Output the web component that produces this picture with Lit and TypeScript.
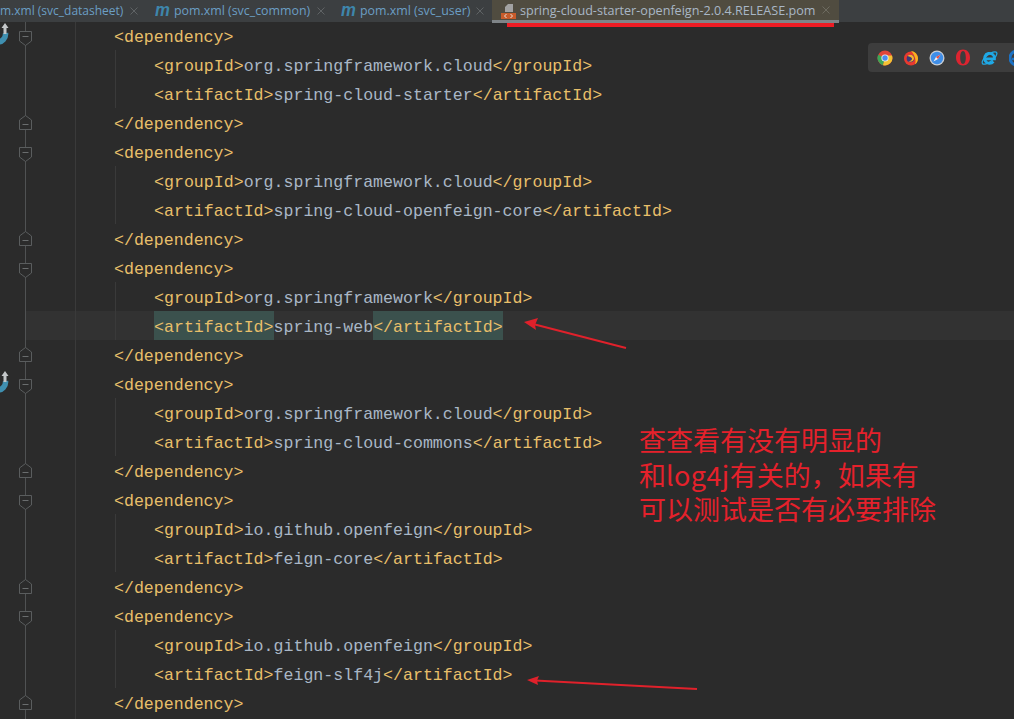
import { LitElement, html, css, svg } from "lit";
import { customElement } from "lit/decorators.js";

type Row = { kind: "open" | "close" | "child" | "blank"; tag?: string; text?: string; hl?: boolean; maven?: boolean };

const deps: [string, string][] = [
  ["org.springframework.cloud", "spring-cloud-starter"],
  ["org.springframework.cloud", "spring-cloud-openfeign-core"],
  ["org.springframework", "spring-web"],
  ["org.springframework.cloud", "spring-cloud-commons"],
  ["io.github.openfeign", "feign-core"],
  ["io.github.openfeign", "feign-slf4j"],
];

const rows: Row[] = [];
deps.forEach(([g, a], i) => {
  rows.push({ kind: "open", maven: i === 0 || i === 3 });
  rows.push({ kind: "child", tag: "groupId", text: g });
  rows.push({ kind: "child", tag: "artifactId", text: a, hl: i === 2 });
  rows.push({ kind: "close" });
});
rows.push({ kind: "blank" });

const fold = (up: boolean) => html`<svg class="fold ${up ? "up" : "down"}" width="13" height="15" viewBox="0 0 13 15">
  <path d="${up ? "M.5 14.5V5L6.5 .5 12.5 5v9.500z" : "M.5 .5V10l6 4.500 6-4.500V.5z"}" fill="#2b2b2b" stroke="#5a5d5e"/>
  <path d="${up ? "M3.500 9.500h6" : "M3.500 5.500h6"}" stroke="#6a6d6e"/>
</svg>`;

const maven = html`<svg class="maven" width="9" height="24" viewBox="0 0 9 24">
  <path d="M5.500 11A8 8 0 0 1 -3 20" fill="none" stroke="#3f8fb0" stroke-width="5.500"/>
  <path d="M5 1 8.500 6H6.500v6h-3V6H1.500z" fill="#c4c7c9"/>
</svg>`;

const cross = (c: string) => html`<svg class="x" width="8" height="8" viewBox="0 0 8 8"><path d="M.5 .5l7 7M7.500 .5l-7 7" stroke="${c}" stroke-width="1"/></svg>`;

@customElement("app-root")
export class AppRoot extends LitElement {
  static styles = css`
    :host { display: block; width: 1014px; height: 719px; overflow: hidden; position: relative; background: #2b2b2b; }
    .tabs { display: flex; align-items: flex-start; height: 22px; background: #3c3f41; font-family: "Open Sans", "Noto Sans", sans-serif; font-size: 12.4px; color: #6b9ec4; position: relative; z-index: 2; margin-bottom: -1px; white-space: nowrap; }
    .tab { display: flex; align-items: center; height: 21px; flex: none; }
    .tab .x { flex: none; }
    .m { display: inline-block; font: italic 700 19px/1 "Liberation Sans", sans-serif; color: #3e86ac; margin-right: 4px; width: 15px; transform: scaleX(0.88); transform-origin: left center; position: relative; top: -1px; }
    .t0 { width: 155px; font-size: 12px; }
    .t0 .x { margin-left: 7px; }
    .t1 { width: 186px; }
    .t1 .x { margin-left: 7px; }
    .t2 { width: 151px; }
    .t2 .x { margin-left: 6px; }
    .active { width: 347px; height: 23px; box-sizing: border-box; background: #504c40; border-bottom: 3px solid #7f8488; color: #a9b7c6; font-size: 12.6px; padding-left: 9px; }
    .active svg:first-child { margin-right: 4px; flex: none; }
    .active .x { margin-left: 7px; }
    .code { font-family: "Liberation Mono", monospace; font-size: 16.6px; line-height: 29px; color: #a9b7c6; }
    .row { display: flex; height: 29px; position: relative; }
    .gutter { flex: none; width: 25px; position: relative; }
    .body { flex: 1; position: relative; border-left: 1px solid #505253; white-space: pre; }
    .current .body { background: #323232; }
    .guide1, .guide2 { position: absolute; top: 0; bottom: 0; width: 1px; background: #3a3a3a; }
    .guide1 { left: 49px; }
    .guide2 { left: 89px; }
    .text { position: absolute; top: 2px; z-index: 0; }
    .text.lvl1 { left: 88px; }
    .text.lvl2 { left: 128px; }
    .tag { color: #e8bf6a; }
    .hl { display: inline-block; position: relative; }
    .hl::before { content: ""; position: absolute; left: 0; right: 0; top: -2px; height: 29px; background: #3b514d; z-index: -1; }
    .fold { position: absolute; left: 19px; z-index: 1; }
    .fold.down { top: 10px; }
    .fold.up { top: 7px; }
    .maven { position: absolute; left: 0; top: 1px; }
    .note { position: absolute; left: 639px; top: 423px; font-family: "Noto Sans CJK SC", sans-serif; font-size: 27px; line-height: 34.5px; color: #e5212b; white-space: nowrap; }
    .note .latin { letter-spacing: 0.4px; }
    .underline { position: absolute; left: 507px; top: 23px; width: 327px; height: 4px; background: #ed1c24; z-index: 3; }
    .browsers { position: absolute; left: 868px; top: 43px; width: 160px; height: 29px; background: #3d3d3d; border-radius: 4px; display: flex; align-items: center; gap: 10px; padding-left: 9px; box-sizing: border-box; z-index: 3; }
    .browsers svg { flex: none; }
    .browsers .ie { margin-left: -1px; }
    .overlay { position: absolute; left: 0; top: 0; z-index: 3; pointer-events: none; }
  `;

  private renderRow(r: Row) {
    const inner =
      r.kind === "open"
        ? html`<span class="text lvl1 tag">&lt;dependency&gt;</span>`
        : r.kind === "close"
        ? html`<span class="text lvl1 tag">&lt;/dependency&gt;</span>`
        : r.kind === "child"
        ? r.hl
          ? html`<span class="text lvl2"><span class="tag hl">&lt;${r.tag}&gt;</span>${r.text}<span class="tag hl">&lt;/${r.tag}&gt;</span></span>`
          : html`<span class="text lvl2"><span class="tag">&lt;${r.tag}&gt;</span>${r.text}<span class="tag">&lt;/${r.tag}&gt;</span></span>`
        : null;
    return html`<div class="row ${r.hl ? "current" : ""}">
      <div class="gutter">${r.maven ? maven : null}</div>
      ${r.kind === "open" ? fold(false) : r.kind === "close" ? fold(true) : null}
      <div class="body">
        <i class="guide1"></i>
        ${r.kind === "child" ? html`<i class="guide2"></i>` : null}
        ${inner}
      </div>
    </div>`;
  }

  render() {
    return html`
      <div class="tabs">
        <div class="tab t0"><span>m.xml (svc_datasheet)</span>${cross("#5f6365")}</div>
        <div class="tab t1"><span class="m">m</span><span>pom.xml (svc_common)</span>${cross("#5f6365")}</div>
        <div class="tab t2"><span class="m">m</span><span>pom.xml (svc_user)</span>${cross("#5f6365")}</div>
        <div class="tab active">
          <svg width="15" height="18" viewBox="0 0 15 18">
            <path d="M7 3h5v8H4V6z" fill="#a2a2a2"/>
            <rect x="0" y="12" width="15" height="6" fill="#c75b2a"/>
            <path d="M5.500 13 3.500 15l2 2M9.500 13l2 2-2 2" fill="none" stroke="#e8e0d8" stroke-width="1"/>
          </svg>
          <span>spring-cloud-starter-openfeign-2.0.4.RELEASE.pom</span>${cross("#6d6b60")}
        </div>
      </div>
      <div class="code">${rows.map((r) => this.renderRow(r))}</div>
      <div class="underline"></div>
      <div class="browsers">
        <svg width="16" height="16" viewBox="0 0 16 16">
          <circle cx="8" cy="8" r="7.500" fill="#e0453a"/>
          <path d="M8 8 1.200 4.800A7.500 7.500 0 0 0 6 15.200z" fill="#3ba757"/>
          <path d="M8 8 6 15.200A7.500 7.500 0 0 0 15 5.500H8z" fill="#f3c233"/>
          <circle cx="8" cy="8" r="3.600" fill="#eee"/><circle cx="8" cy="8" r="2.700" fill="#4c8bf0"/>
        </svg>
        <svg width="16" height="16" viewBox="0 0 16 16">
          <circle cx="8" cy="8.500" r="7" fill="#e8392f"/>
          <path d="M8 1C11 1 15 4 15 8.500c0 2.500-1 4.500-3 5.800C13.500 11 12 5 8 1z" fill="#f8b21f"/>
          <circle cx="7.500" cy="8.500" r="3.800" fill="#3c3a7a"/>
          <path d="M4.500 6c2-2 6-1.500 6.500 2 .3 3-3 4.500-5.500 3.300 2 0 3.500-1 3.500-2.500C9 7 6.500 7 4.500 6z" fill="#f7b32b"/>
        </svg>
        <svg width="16" height="16" viewBox="0 0 16 16">
          <circle cx="8" cy="8" r="7.500" fill="#c9ced4"/><circle cx="8" cy="8" r="6.200" fill="#3f8ee8"/>
          <path d="M11.500 4.500 9 9 4.500 11.500 7 7z" fill="#f4f4f4"/><path d="M11.500 4.500 9 9 7 7z" fill="#e8483f"/>
        </svg>
        <svg width="16" height="17" viewBox="0 0 16 17">
          <path fill-rule="evenodd" d="M8 .5C3.800 .5 1 4 1 8.500s2.800 8 7 8 7-3.500 7-8-2.800-8-7-8zm0 1.500c1.800 0 2.800 2.900 2.800 6.500S9.800 15 8 15s-2.800-2.900-2.800-6.500S6.200 2 8 2z" fill="#dc2430"/>
        </svg>
        <svg class="ie" width="19" height="18" viewBox="0 0 19 18">
          <ellipse cx="9.500" cy="9" rx="9" ry="3.500" transform="rotate(-38 9.500 9)" fill="none" stroke="#1fa9e6" stroke-width="1.300"/>
          <path d="M5 9.800h9.500A5 5 0 1 0 13.400 12.500" fill="none" stroke="#1fa9e6" stroke-width="2.800"/>
        </svg>
        <svg width="16" height="18" viewBox="0 0 16 18">
          <circle cx="8" cy="9" r="7" fill="none" stroke="#1c72c4" stroke-width="3"/>
          <path d="M3 10h10" stroke="#1c72c4" stroke-width="2.500"/>
        </svg>
      </div>
      <svg class="overlay" width="1014" height="719" viewBox="0 0 1014 719">
        ${svg`
          <path d="M626 348 533 324" stroke="#e0212b" stroke-width="2" fill="none"/>
          <path d="M524 322 538 318 535 325 536 330z" fill="#e0212b"/>
          <path d="M697 689 535 680.500" stroke="#e0212b" stroke-width="2" fill="none"/>
          <path d="M527 680 539 676 537 680.500 538 685z" fill="#e0212b"/>
        `}
      </svg>
      <div class="note">查查看有没有明显的<br />和<span class="latin">log4j</span>有关的，如果有<br />可以测试是否有必要排除</div>
    `;
  }
}
